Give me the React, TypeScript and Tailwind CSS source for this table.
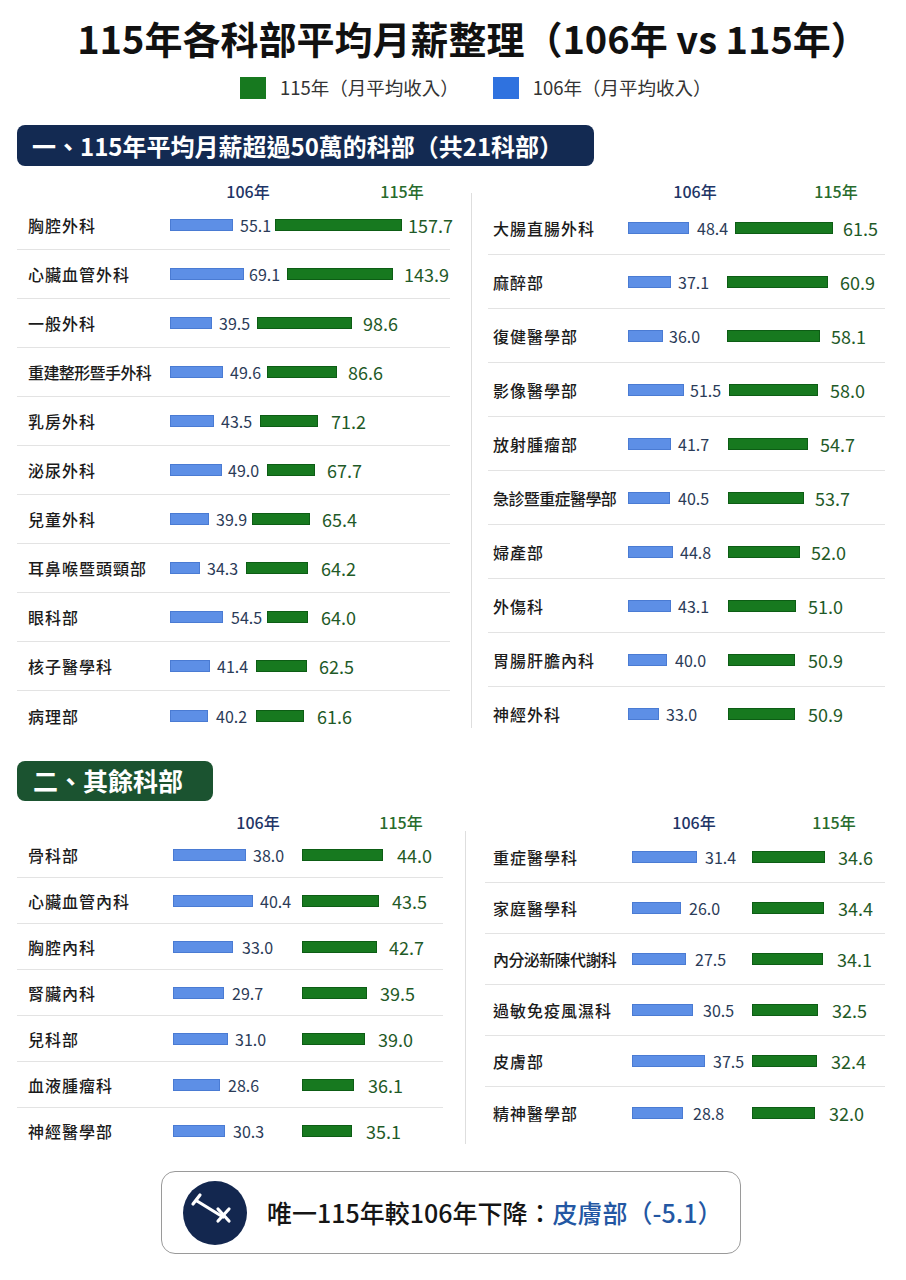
import React from "react";

type RowData = [string, string, string, number, number, number, number, number];
// [name, 106, 115, blueEnd, blueLabelX, greenStart, greenEnd, greenLabelX]

const topLeft: RowData[] = [
  ["胸腔外科", "55.1", "157.7", 233, 240, 275, 402, 408],
  ["心臟血管外科", "69.1", "143.9", 244, 249, 287, 393, 404],
  ["一般外科", "39.5", "98.6", 212, 219, 257, 352, 363],
  ["重建整形暨手外科", "49.6", "86.6", 223, 230, 267, 337, 348],
  ["乳房外科", "43.5", "71.2", 214, 221, 260, 318, 331],
  ["泌尿外科", "49.0", "67.7", 222, 228, 267, 315, 327],
  ["兒童外科", "39.9", "65.4", 209, 216, 252, 310, 322],
  ["耳鼻喉暨頭頸部", "34.3", "64.2", 200, 207, 246, 308, 321],
  ["眼科部", "54.5", "64.0", 223, 231, 267, 308, 321],
  ["核子醫學科", "41.4", "62.5", 210, 217, 256, 307, 319],
  ["病理部", "40.2", "61.6", 208, 216, 256, 304, 317],
];

const topRight: RowData[] = [
  ["大腸直腸外科", "48.4", "61.5", 689, 697, 735, 833, 843],
  ["麻醉部", "37.1", "60.9", 671, 678, 727, 828, 840],
  ["復健醫學部", "36.0", "58.1", 663, 669, 727, 820, 831],
  ["影像醫學部", "51.5", "58.0", 684, 690, 729, 818, 830],
  ["放射腫瘤部", "41.7", "54.7", 671, 678, 728, 808, 820],
  ["急診暨重症醫學部", "40.5", "53.7", 670, 678, 728, 804, 815],
  ["婦產部", "44.8", "52.0", 673, 680, 728, 800, 811],
  ["外傷科", "43.1", "51.0", 671, 678, 728, 796, 808],
  ["胃腸肝膽內科", "40.0", "50.9", 667, 675, 728, 795, 808],
  ["神經外科", "33.0", "50.9", 659, 666, 728, 795, 808],
];

const restLeft: RowData[] = [
  ["骨科部", "38.0", "44.0", 246, 253, 302, 383, 397],
  ["心臟血管內科", "40.4", "43.5", 253, 260, 302, 379, 392],
  ["胸腔內科", "33.0", "42.7", 233, 242, 302, 377, 389],
  ["腎臟內科", "29.7", "39.5", 224, 232, 302, 367, 380],
  ["兒科部", "31.0", "39.0", 228, 235, 302, 365, 378],
  ["血液腫瘤科", "28.6", "36.1", 220, 228, 302, 354, 368],
  ["神經醫學部", "30.3", "35.1", 225, 233, 302, 352, 366],
];

const restRight: RowData[] = [
  ["重症醫學科", "31.4", "34.6", 697, 705, 752, 825, 838],
  ["家庭醫學科", "26.0", "34.4", 681, 689, 752, 824, 838],
  ["內分泌新陳代謝科", "27.5", "34.1", 686, 695, 752, 823, 837],
  ["過敏免疫風濕科", "30.5", "32.5", 693, 703, 752, 818, 832],
  ["皮膚部", "37.5", "32.4", 705, 713, 752, 817, 831],
  ["精神醫學部", "28.8", "32.0", 683, 693, 752, 815, 829],
];

function Row({ r, barStart, rowCls, nameCls }: { r: RowData; barStart: number; rowCls: string; nameCls: string }) {
  const [name, a, b, be, bl, gs, ge, gl] = r;
  const long = name.length >= 8;
  return (
    <div className={`flex items-center border-b border-[#e3e3e3] last:border-b-0 ${rowCls}`}>
      <div
        className={`shrink-0 font-medium text-[#1b1b1b] text-[16px] ${nameCls} ${
          long ? "tracking-[-0.6px]" : "tracking-[1px]"
        }`}
      >
        {name}
      </div>
      <div className="h-[12px] shrink-0 border border-[#4a7bd3] bg-[#5d8fe6]" style={{ width: be - barStart }} />
      <span className="shrink-0 text-[16px] leading-none text-[#2b3b58]" style={{ width: gs - be, paddingLeft: bl - be }}>
        {a}
      </span>
      <div className="h-[12px] shrink-0 border border-[#0d5d15] bg-[#17791f]" style={{ width: ge - gs }} />
      <span className="shrink-0 text-[18px] leading-none text-[#1f5a28]" style={{ marginLeft: gl - ge }}>
        {b}
      </span>
    </div>
  );
}

function Column({
  rows,
  barStart,
  widthCls,
  rowCls,
  nameCls,
  h106,
  h115,
}: {
  rows: RowData[];
  barStart: number;
  widthCls: string;
  rowCls: string;
  nameCls: string;
  h106: string;
  h115: string;
}) {
  return (
    <div className={`flex shrink-0 flex-col ${widthCls}`}>
      <div className="flex h-[21px] items-center text-[16px] font-medium">
        <span className={`w-[60px] text-center text-[#1e3566] ${h106}`}>106年</span>
        <span className={`w-[60px] text-center text-[#276b2c] ${h115}`}>115年</span>
      </div>
      {rows.map((r) => (
        <Row key={r[0]} r={r} barStart={barStart} rowCls={rowCls} nameCls={nameCls} />
      ))}
    </div>
  );
}

function DropIcon() {
  return (
    <svg width="64" height="64" viewBox="0 0 64 64" fill="none">
      <g stroke="white" strokeWidth="3.2" strokeLinecap="round">
        <path d="M14 20 L40 36" />
        <path d="M10 23 L17 14" />
        <path d="M35 28 L46 40" />
        <path d="M35 40 L46 28" />
      </g>
    </svg>
  );
}

export default function App() {
  return (
    <div className="h-[1280px] w-[906px] overflow-hidden bg-white font-['Noto_Sans_CJK_TC','Noto_Sans',sans-serif] text-[#111]">
      <h1 className="pl-[40px] pt-[15px] text-center text-[38px] font-bold leading-[46px] text-[#111]">
        115年各科部平均月薪整理（106年 vs 115年）
      </h1>

      <div className="mt-[15px] flex h-[24px] items-center pl-[240px] text-[18.5px] text-[#333]">
        <span className="h-[22px] w-[26px] bg-[#17791f]" />
        <span className="ml-[14px]">115年（月平均收入）</span>
        <span className="ml-[34px] h-[22px] w-[26px] bg-[#2f72df]" />
        <span className="ml-[14px]">106年（月平均收入）</span>
      </div>

      <div className="ml-[17px] mt-[25px] flex h-[41px] w-[577px] items-center rounded-[8px] bg-[#132a52] pl-[15px] text-[24px] font-bold text-white">
        一、115年平均月薪超過50萬的科部（共21科部）
      </div>

      <div className="mt-[14px] flex pl-[17px]">
        <Column
          rows={topLeft}
          barStart={170}
          widthCls="w-[433px]"
          rowCls="h-[49px]"
          nameCls="w-[153px] pl-[11px]"
          h106="ml-[201px]"
          h115="ml-[94px]"
        />
        <div className="flex w-[38px] shrink-0 py-[13px] pl-[21px]">
          <div className="w-px bg-[#dedede]" />
        </div>
        <Column
          rows={topRight}
          barStart={628}
          widthCls="w-[397px]"
          rowCls="h-[54px]"
          nameCls="w-[140px] pl-[5px]"
          h106="ml-[177px]"
          h115="ml-[81px]"
        />
      </div>

      <div className="ml-[17px] mt-[20px] flex h-[40px] w-[196px] items-center rounded-[8px] bg-[#1b5330] pl-[16px] text-[25px] font-bold text-white">
        二、其餘科部
      </div>

      <div className="mt-[10px] flex pl-[17px]">
        <Column
          rows={restLeft}
          barStart={173}
          widthCls="w-[426px]"
          rowCls="h-[46px]"
          nameCls="w-[156px] pl-[11px]"
          h106="ml-[211px]"
          h115="ml-[83px]"
        />
        <div className="flex w-[42px] shrink-0 pb-[10px] pl-[22px] pt-[20px]">
          <div className="w-px bg-[#dedede]" />
        </div>
        <Column
          rows={restRight}
          barStart={632}
          widthCls="w-[400px]"
          rowCls="h-[51px]"
          nameCls="w-[147px] pl-[8px]"
          h106="ml-[179px]"
          h115="ml-[80px]"
        />
      </div>

      <div className="ml-[161px] mt-[17px] flex h-[83px] w-[580px] items-center rounded-[14px] border border-[#9a9a9a] pl-[21px]">
        <div className="flex h-[64px] w-[64px] shrink-0 items-center justify-center rounded-full bg-[#13274f]">
          <DropIcon />
        </div>
        <div className="ml-[20px] text-[25px] font-medium text-[#151515]">
          唯一115年較106年下降：<span className="text-[#2357a3]">皮膚部（-5.1）</span>
        </div>
      </div>
    </div>
  );
}
